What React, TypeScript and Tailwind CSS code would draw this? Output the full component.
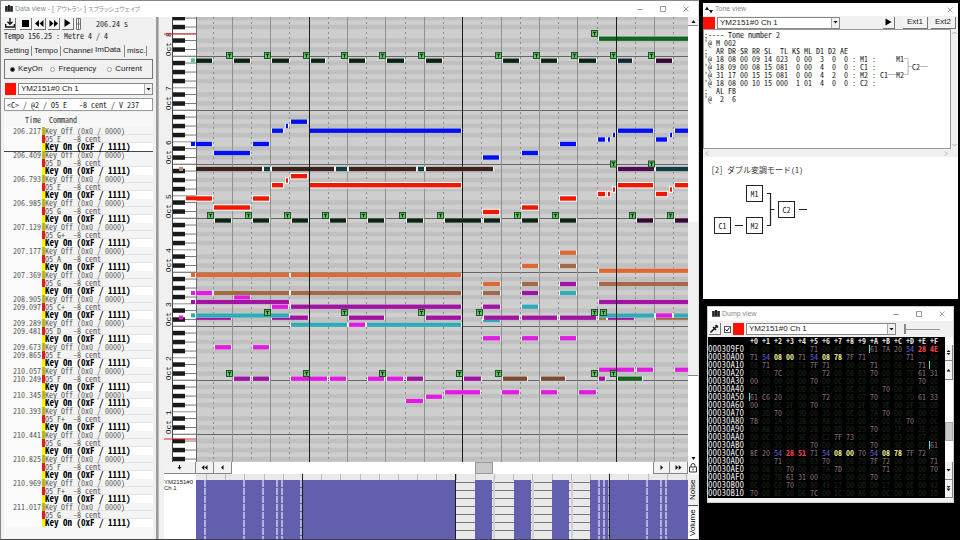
import React from "react";

const MONO =
  "font-['Noto_Sans_Mono_CJK_JP','Liberation_Mono','Noto_Sans_CJK_JP',monospace]";
const SANS = "font-['Liberation_Sans','Noto_Sans_CJK_JP',sans-serif]";
const MONO_STACK =
  "'Noto Sans Mono CJK JP','Liberation Mono','Noto Sans CJK JP',monospace";

/* ---------- event list ---------- */

type Ev = [time: string, kind: "off" | "on" | "note", note?: string];

const EVENTS: Ev[] = [
  ["206.217", "off"], ["", "note", "E"], ["", "on"],
  ["206.409", "off"], ["", "note", "D"], ["", "on"],
  ["206.793", "off"], ["", "note", "E"], ["", "on"],
  ["206.985", "off"], ["", "note", "G"], ["", "on"],
  ["207.129", "off"], ["", "note", "G+"], ["", "on"],
  ["207.177", "off"], ["", "note", "A"], ["", "on"],
  ["207.369", "off"], ["", "note", "G"], ["", "on"],
  ["208.905", "off"],
  ["209.097", "note", "C+"], ["", "on"],
  ["209.289", "off"],
  ["209.481", "note", "D"], ["", "on"],
  ["209.673", "off"],
  ["209.865", "note", "E"], ["", "on"],
  ["210.057", "off"],
  ["210.249", "note", "F"], ["", "on"],
  ["210.345", "off"], ["", "on"],
  ["210.393", "off"], ["", "note", "F+"], ["", "on"],
  ["210.441", "off"], ["", "note", "G"], ["", "on"],
  ["210.825", "off"], ["", "note", "F"], ["", "on"],
  ["210.969", "off"], ["", "note", "F+"], ["", "on"],
  ["211.017", "off"], ["", "note", "G"], ["", "on"],
];

const EV_STYLE = {
  off: { row: "bg-[#f4f4f4] text-[#555]", mark: "bg-[#b8bc10]" },
  on: { row: "bg-white text-black", mark: "bg-[#fafa00]" },
  note: { row: "bg-[#f4f4f4] text-[#555]", mark: "bg-[#e01c2c]" },
};

/* The playback cursor is drawn above this row. */
const CURSOR_ROW = 3;

function EventList() {
  return (
    <table className={`w-full border-collapse ${MONO} text-[8px] leading-[8px]`}>
      <thead>
        <tr className="h-[15px] text-[#333]">
          <th className="w-[37px] p-0 text-right font-normal">Time</th>
          <th className="w-1 p-0" />
          <th className="p-0 pl-1 text-left font-normal">Command</th>
        </tr>
      </thead>
      <tbody>
        {EVENTS.map(([time, kind, note], i) => (
          <tr key={i} className={`h-2 ${EV_STYLE[kind].row}`}>
            <td className={`h-2 bg-[#fbfbfb] p-0 text-right ${i === CURSOR_ROW ? "shadow-[inset_0_1px_0_#444]" : ""}`}>
              {time}
            </td>
            <td className="h-2 p-0 pl-px">
              <div className={`h-2 w-[3px] ${EV_STYLE[kind].mark}`} />
            </td>
            <td
              className={`h-2 whitespace-pre p-0 ${
                i === CURSOR_ROW
                  ? "shadow-[inset_0_1px_0_#444]"
                  : kind === "on"
                    ? ""
                    : "shadow-[inset_0_-1px_0_#e2e2e2]"
              }`}
            >
              {kind === "off" && "Key Off (0x0 / 0000)"}
              {kind === "on" && (
                <b className="block h-2 text-[9px] leading-[8px]">Key On (0xF / 1111)</b>
              )}
              {kind === "note" && `O5 ${(note ?? "").padEnd(2)}  -8 cent`}
            </td>
          </tr>
        ))}
      </tbody>
    </table>
  );
}

/* ---------- shared controls ---------- */

function ToolButton({ label, children, className = "" }: {
  label: string; children: React.ReactNode; className?: string;
}) {
  return (
    <button
      aria-label={label}
      className={`flex h-3 shrink-0 items-center justify-center border-r border-b border-[#777] bg-[#f3f3f3] ${className}`}
    >
      {children}
    </button>
  );
}

function ChannelSelect({ label, className }: { label: string; className: string }) {
  return (
    <div className={`flex h-3 border border-[#888] bg-white ${className}`}>
      <select
        aria-label={label}
        className={`min-w-0 flex-1 appearance-none bg-transparent pl-0.5 ${SANS} text-[8px] leading-[10px] text-[#222] outline-none`}
      >
        <option>YM2151#0 Ch 1</option>
      </select>
      <span className="flex w-2 items-center justify-center border-l border-[#aaa] bg-[#f0f0f0]">
        <svg width="5" height="3" aria-hidden="true"><path d="M0.5 0h4L2.500 2.500z" fill="#111" /></svg>
      </span>
    </div>
  );
}

function WindowButtons() {
  return (
    <div className="flex gap-[15px]">
      <button aria-label="Minimize">
        <svg width="8" height="8"><path d="M1.500 4.500h5" stroke="#999" /></svg>
      </button>
      <button aria-label="Maximize">
        <svg width="8" height="8"><path d="M1.500 1.500h5v5h-5z" stroke="#999" fill="none" /></svg>
      </button>
      <CloseButton />
    </div>
  );
}

function CloseButton() {
  return (
    <button aria-label="Close">
      <svg width="8" height="8"><path d="M1.500 1.500l5 5M6.500 1.500l-5 5" stroke="#888" strokeWidth="0.8" /></svg>
    </button>
  );
}

function BarsIcon() {
  return (
    <svg width="8" height="8" aria-hidden="true">
      <path d="M0 1h8v6h-8z" fill="#666" />
      <path d="M0.500 1h1.800v5h-1.800zM3 0h2v6h-2zM5.700 1h1.800v5h-1.800z" fill="#222" />
    </svg>
  );
}

/* ---------- left control panel ---------- */

function ControlPanel() {
  const radios = ["KeyOn", "Frequency", "Current"];
  const radioPad = ["", "ml-2", "ml-[11px]"];
  return (
    <section className="flex w-[157px] shrink-0 flex-col border-r-2 border-[#999] bg-[#f0f0f0] px-[3px]">
      <div className={`flex h-[13px] items-center ${MONO} text-[8px]`}>
        <ToolButton label="Import" className="w-3">
          <svg width="10" height="10"><path d="M5 0v6M2.500 3.800L5 6.300 7.500 3.800M0.700 6v3h8.600v-3" fill="none" stroke="#111" strokeWidth="1.300" /></svg>
        </ToolButton>
        <ToolButton label="Stop" className="ml-1 w-3">
          <svg width="7" height="7"><path d="M0 0h7v7h-7z" fill="#000" /></svg>
        </ToolButton>
        <ToolButton label="Rewind" className="ml-0.5 w-3">
          <svg width="9" height="7"><path d="M4 0v7L0 3.500zM8.500 0v7l-4-3.500z" fill="#000" /></svg>
        </ToolButton>
        <ToolButton label="Fast forward" className="ml-0.5 w-3">
          <svg width="9" height="7"><path d="M0.500 0v7l4-3.500zM5 0v7l4-3.500z" fill="#000" /></svg>
        </ToolButton>
        <ToolButton label="Play" className="ml-0.5 w-3">
          <svg width="7" height="8"><path d="M0.500 0v8L6.500 4z" fill="#000" /></svg>
        </ToolButton>
        <svg className="ml-0.5" width="6" height="12" aria-hidden="true">
          <path d="M0.500 0.500h4v11h-4zM2.500 0.500v11M0.500 6h4" fill="#fff" stroke="#666" strokeWidth="0.900" />
        </svg>
        <span className="ml-[14px] text-[#222]">206.24 s</span>
      </div>
      <p className={`h-3 whitespace-pre ${MONO} text-[8px] leading-3 text-[#222]`}>
        {"Tempo 156.25 : Metre 4 / 4"}
      </p>
      <div role="tablist" className={`mt-0.5 flex h-[14px] items-center ${SANS} text-[8px] leading-[10px] text-[#222]`}>
        <button role="tab" className="w-7 border-r border-[#888] text-left">Setting</button>
        <button role="tab" className="w-[29px] border-r border-[#888] pl-0.5 text-left">Tempo</button>
        <button role="tab" className="w-[34px] pl-0.5 text-left">Channel</button>
        <button role="tab" aria-selected="true" className="w-[30px] border-r border-[#888] pb-0.5 text-left">ImData</button>
        <button role="tab" className="w-[22px] border-r border-[#888] pl-0.5 text-left">misc.</button>
      </div>
      <div className={`mt-px flex h-5 items-center border border-[#777] pl-[5px] ${SANS} text-[8px] text-[#222]`}>
        {radios.map((r, i) => (
          <label key={r} className={`flex items-center gap-[3px] ${radioPad[i]}`}>
            <input
              type="radio"
              name="mode"
              defaultChecked={i === 0}
              className="h-[5px] w-[5px] appearance-none rounded-full border border-[#999] bg-white checked:border-[#555] checked:bg-black"
            />
            {r}
          </label>
        ))}
      </div>
      <div className="mt-1 flex gap-0.5 pl-px">
        <span className="h-3 w-[11px] bg-[#ff1000]" />
        <ChannelSelect label="Channel" className="flex-1" />
      </div>
      <input
        readOnly
        aria-label="Current state"
        value="<C> / @2 / O5 E   -8 cent / V 237"
        className={`mt-[3px] h-[13px] w-full border border-[#999] bg-white pl-0.5 ${MONO} text-[8px] leading-[10px] text-[#222] outline-none`}
      />
      <div className="mt-px flex-1 bg-[#f7f7f7]">
        <EventList />
      </div>
    </section>
  );
}

/* ---------- piano roll ---------- */

const LEFT = 196;
const TOP = 17;
const SEMI = 4.5;
const BASE = 434.3;
const BEAT = 19.2;
const BAR = 309;

const C = {
  dk: "#0c2412", pl: "#330636", tl: "#123c44", br: "#3a231a", gn: "#12641e",
  bl: "#0010f0", rd: "#ee1800", or: "#dc6a34", bw: "#a06a48", mg: "#e01ce0",
  pu: "#a014a4", cy: "#32aab6", db: "#7a4a34", dp: "#4d0c52", nv: "#0f2a34",
};
type Note = [keyof typeof C, number, number, number];

const LEAD: [number, number, number][] = [
  [196, 212, 144], [214, 250, 153], [253, 269, 144], [272, 283, 130.7],
  [286, 288, 126], [291, 307, 121.7], [310, 461, 130.7], [483, 499, 157.5],
  [522, 538, 153], [560, 576, 144], [598, 605, 139.5], [608, 610, 139.5],
  [613, 615, 135], [618, 653, 130.7], [656, 667, 139.5], [670, 672, 135],
  [675, 700, 130.7],
];

const NOTES: Note[] = [
  ["gn", 599, 700, 38.7],
  ["dk", 196, 212, 60.7], ["dk", 234, 250, 60.7], ["dk", 272, 289, 60.7],
  ["dk", 311, 325, 60.7], ["dk", 349, 365, 60.7], ["dk", 387, 404, 60.7],
  ["dk", 426, 442, 60.7], ["dk", 503, 519, 60.7], ["dk", 541, 557, 60.7],
  ["dk", 579, 596, 60.7], ["nv", 618, 632, 60.7], ["pl", 656, 672, 60.7],
  ["br", 196, 262, 169], ["tl", 264, 270, 169], ["br", 272, 334, 169],
  ["tl", 336, 347, 169], ["br", 349, 416, 169], ["tl", 418, 424, 169],
  ["br", 426, 493, 169], ["dp", 618, 654, 169], ["tl", 656, 700, 169],
  ["dk", 215, 231, 220.5], ["dk", 253, 269, 220.5], ["dk", 292, 308, 220.5],
  ["dk", 330, 346, 220.5], ["dk", 368, 384, 220.5], ["dk", 407, 423, 220.5],
  ["dk", 445, 481, 220.5], ["dk", 484, 500, 220.5], ["dk", 522, 538, 220.5],
  ["dk", 560, 576, 220.5], ["pl", 637, 653, 220.5], ["pl", 675, 700, 220.5],
  ["or", 196, 289, 275], ["or", 291, 461, 275], ["or", 483, 500, 284],
  ["or", 522, 538, 266], ["or", 560, 576, 252.7], ["or", 599, 700, 270.7],
  ["bw", 214, 289, 293], ["bw", 291, 461, 293], ["bw", 483, 500, 293],
  ["bw", 522, 538, 284], ["bw", 560, 576, 266], ["bw", 599, 700, 284],
  ["mg", 196, 212, 293], ["mg", 234, 250, 297.5], ["mg", 272, 288, 306.7],
  ["pu", 196, 289, 302], ["pu", 291, 461, 306.7], ["pu", 483, 500, 306.7],
  ["pu", 522, 538, 293], ["pu", 560, 576, 284], ["pu", 599, 700, 302],
  ["cy", 483, 500, 320],
  ["bw", 599, 606, 317.7], ["pu", 608, 634, 317.7], ["bw", 656, 700, 317.7],
  ["pu", 196, 231, 317.7], ["pu", 272, 308, 317.7], ["pu", 349, 384, 317.7],
  ["pu", 426, 461, 317.7], ["pu", 484, 519, 317.7], ["pu", 522, 557, 317.7],
  ["pu", 560, 596, 317.7],
  ["cy", 196, 289, 315.5], ["cy", 522, 538, 306.7], ["cy", 560, 576, 293],
  ["cy", 599, 654, 315.5], ["mg", 656, 672, 315.5], ["cy", 674, 700, 315.5],
  ["cy", 291, 347, 324.7], ["mg", 349, 365, 324.7], ["cy", 367, 461, 324.7],
  ["mg", 215, 231, 347.3], ["mg", 253, 269, 347.3], ["mg", 483, 500, 338.3],
  ["mg", 522, 538, 338.3], ["mg", 560, 576, 338.3], ["mg", 599, 634, 369.7],
  ["mg", 637, 653, 369.7], ["mg", 675, 700, 369.7],
  ["pu", 234, 250, 378.7], ["pu", 253, 269, 378.7], ["mg", 291, 327, 378.7],
  ["mg", 330, 346, 378.7], ["mg", 368, 384, 378.7], ["mg", 387, 403, 378.7],
  ["pu", 407, 423, 378.7], ["pu", 464, 481, 378.7], ["db", 503, 527, 378.7],
  ["db", 541, 565, 378.7], ["pu", 599, 605, 378.7], ["gn", 618, 642, 378.7],
  ["mg", 406, 423, 401], ["mg", 426, 442, 396.7], ["mg", 445, 480, 392.3],
  ["mg", 502, 519, 392.3], ["mg", 541, 557, 392.3], ["mg", 579, 596, 392.3],
];

const TIES: [number, number[]][] = [
  [33.5, [594.5]],
  [55.5, [229.5, 267.5, 306.5, 344.5, 382.5, 421.5, 498.5, 536.5, 574.5, 613.5, 651.5]],
  [164, [613.5, 651.5]],
  [215.5, [210.5, 248.5, 287.5, 325.5, 363.5, 402.5, 440.5, 517.5, 555.5, 632.5, 670.5]],
  [312.5, [267.5, 344.5, 421.5, 479.5, 594.5, 603.5]],
  [373.5, [229.5, 306.5, 382.5, 459.5, 498.5, 594.5, 613.5]],
];

const isBlack = (s: number) => [1, 3, 6, 8, 10].includes(((s % 12) + 12) % 12);
const SEMIS = Array.from({ length: 101 }, (_, i) => i - 7);
const OCT_LINES = Array.from({ length: 8 }, (_, i) => BASE - 54 * i);

function Keyboard() {
  const marks: [string, number, number, number][] = [
    ["#50c888", 191, 4, 60.3], [C.bl, 191, 4, 144], ["#b88a78", 179, 4, 169],
    [C.rd, 186, 10, 198.3], [C.or, 191, 4, 275], [C.mg, 191, 4, 293],
    [C.pu, 191, 4, 302], [C.cy, 191, 4, 315.3], [C.mg, 179, 4, 317.5],
  ];
  return (
    <svg className="block h-full w-full" role="img" aria-label="Keyboard">
      <g transform={`translate(-164 ${-TOP})`}>
        <rect x="164" y="0" width="9" height="470" fill="#f0f0f0" />
        <rect x="172.500" y="0" width="24" height="470" fill="#fff" stroke="#444" />
        {SEMIS.map((s) => {
          const y = BASE - SEMI * (s + 1);
          const m = ((s % 12) + 12) % 12;
          return (
            <g key={s}>
              {isBlack(s) && (
                <>
                  <path d={`M184 ${y + 2.25}H196`} stroke="#777" />
                  <rect x="173" y={y} width="12" height="4.5" fill="#1a1a1a" />
                </>
              )}
              {(m === 0 || m === 5) && (
                <path d={`M173 ${y + SEMI}H196`} stroke="#777" strokeWidth={m ? 0.8 : 1.2} />
              )}
            </g>
          );
        })}
        {OCT_LINES.map((y, i) => (
          <text
            key={i}
            transform={`translate(171 ${y}) rotate(-90)`}
            fontFamily="'Liberation Mono',monospace"
            fontSize="8"
            fill="#111"
          >
            {`Oct ${i + 1}`}
          </text>
        ))}
        <path d="M164 34h32M164 439h32" stroke="#e02020" />
        {marks.map(([f, x, w, y], i) => (
          <rect key={i} x={x} y={y - 2} width={w} height="4" fill={f} />
        ))}
      </g>
    </svg>
  );
}

function Roll() {
  const ks = Array.from({ length: 120 }, (_, i) => i - 5);
  return (
    <svg className="block h-full w-full" role="img" aria-label="Piano roll">
      <rect width="100%" height="100%" fill="#cecece" />
      <g transform={`translate(0 ${-TOP})`}>
        {SEMIS.filter(isBlack).map((s) => (
          <rect key={s} x="0" y={BASE - SEMI * (s + 1)} width="100%" height={SEMI} fill="#c0c0c0" />
        ))}
        {OCT_LINES.map((y) => (
          <rect key={y} x="0" y={Math.floor(y)} width="100%" height="1" fill="#666" />
        ))}
      </g>
      <g transform={`translate(${-LEFT} ${-TOP})`}>
        {ks.map((k) => {
          const x = Math.floor(BAR + BEAT * k) + 0.5;
          const bar = k % 8 === 0;
          const dotted = k % 2 !== 0;
          return (
            <path
              key={k}
              d={`M${x} ${TOP}V470`}
              stroke={bar ? "#1c1c1c" : dotted ? "#8c8c8c" : "#909090"}
              strokeDasharray={dotted ? "2 3" : undefined}
            />
          );
        })}
        <path d="M196.500 0V470" stroke="#666" />
        {NOTES.map(([c, a, b, y], i) => (
          <g key={i}>
            <rect x={a - 1} y={y - 2.3} width={b - a + 2} height="4.6" fill="#f4f4f4" />
            <rect x={a} y={y - 2.2} width={b - a} height="4.4" fill={C[c]} />
          </g>
        ))}
        {LEAD.map(([a, b, y], i) => (
          <g key={i}>
            <rect x={a - 1} y={y - 2.3} width={b - a + 2} height="4.6" fill="#f4f4f4" />
            <rect x={a} y={y - 2.2} width={b - a} height="4.4" fill={C.bl} />
            <rect x={a - 1} y={y + 51.3} width={b - a + 2} height="6.4" fill="#fff" />
            <rect x={a} y={y + 52.3} width={b - a} height="4.4" fill={C.rd} />
          </g>
        ))}
        <path d={`M309.500 ${TOP}V470M616.500 ${TOP}V470`} stroke="#1c1c1c" />
        {TIES.map(([y, xs]) =>
          xs.map((x) => (
            <g key={`${x}-${y}`}>
              <rect x={x - 3} y={y - 3} width="6" height="6" fill="#5ccc60" stroke="#1c4420" strokeWidth="0.9" />
              <path d={`M${x - 1.7} ${y - 1.3}h3.4M${x} ${y - 1.3}v3.4`} stroke="#0a200c" strokeWidth="1.1" />
            </g>
          ))
        )}
      </g>
    </svg>
  );
}

/* ---------- volume lane ---------- */

const VOL: [number, number][] = [
  [196, 455], [475, 492], [514, 531], [552, 569], [590, 720],
];
const VOL_GAPS = [204, 243, 262, 276, 281, 300, 598, 603, 608, 646, 660, 665];

function VolumeLane() {
  return (
    <svg className="block h-full w-full" role="img" aria-label="Volume">
      <rect width="100%" height="100%" fill="#e9e9e9" />
      <g transform="translate(-196 -473)">
        {[481, 489, 497, 505, 513, 521, 529].map((y) => (
          <rect key={y} x="196" y={y} width="1600" height="1" fill="#777" />
        ))}
        {Array.from({ length: 27 }, (_, i) => (
          <rect key={i} x={Math.floor(206.500 + i * BEAT)} y="473" width="1" height="6" fill="#bbb" />
        ))}
        {[493, 532, 571].map((x) => <rect key={x} x={x} y="479" width="2" height="59" fill="#cfcfd4" />)}
        {VOL.map(([a, b]) => <rect key={a} x={a} y="479" width={b - a} height="59" fill="#625fae" />)}
        {VOL_GAPS.map((x) => (
          <path key={x} d={`M${x + 1} 479V538`} stroke="#b4b2dc" strokeWidth="2" strokeDasharray="7 1" />
        ))}
        {[302, 455, 609].map((x) => <rect key={x} x={x} y="473" width="1" height="65" fill="#1c1c1c" />)}
      </g>
    </svg>
  );
}

function RollButton({ label, className, d }: { label: string; className: string; d: string }) {
  return (
    <button
      aria-label={label}
      className={`flex shrink-0 items-center justify-center border-r border-b border-[#888] bg-[#f2f2f2] ${className}`}
    >
      <svg width="7" height="5"><path d={d} fill="#111" /></svg>
    </button>
  );
}

function RollPane() {
  return (
    <section className="flex min-w-0 flex-1 flex-col border-l border-[#bbb] bg-[#f0f0f0] pl-[5px]">
      <div className="flex min-h-0 flex-1">
        <div className="w-8 shrink-0"><Keyboard /></div>
        <div className="min-w-0 flex-1"><Roll /></div>
        <div className="flex w-2.5 shrink-0 flex-col items-center bg-white">
          <button aria-label="Scroll up" className="flex h-[9px] w-full items-center justify-center border-b border-[#888] bg-[#f2f2f2]">
            <svg width="5" height="3"><path d="M2.500 0L4.500 3h-4z" fill="#111" /></svg>
          </button>
          <div className="mt-[196px] h-[154px] w-full border-b border-[#888] bg-[#f0f0f0]" />
          <div className="flex-1" />
          <button aria-label="Scroll down" className="flex h-2 w-full items-center justify-center">
            <svg width="5" height="3"><path d="M0.500 0h4L2.500 3z" fill="#111" /></svg>
          </button>
        </div>
      </div>
      <div className="flex h-3 shrink-0 bg-white">
        <RollButton label="Follow" className="h-3 w-8" d="M3 0h1v2h1.500L3.500 4.500 1.500 2h1.500z" />
        <RollButton label="Fast back" className="h-3 w-[18px]" d="M3.300 0v5L0.500 2.500zM6.500 0v5L3.700 2.500z" />
        <RollButton label="Back" className="h-3 w-[18px]" d="M4.500 0v5L2 2.500z" />
        <div className="flex flex-1 justify-center pl-[82px]">
          <button aria-label="Scroll position" className="h-3 w-[18px] border border-[#999] bg-[#c8c8c8]" />
        </div>
        <RollButton label="Forward" className="h-3 w-[17px] border-l" d="M2.500 0v5L5 2.500z" />
        <RollButton label="Fast forward" className="h-3 w-[18px]" d="M0.500 0v5L3.300 2.500zM3.700 0v5L6.500 2.500z" />
        <button aria-label="Lock" className="flex w-2.5 items-center justify-center">
          <svg width="8" height="10"><path d="M2 4V2.500a2 2 0 0 1 4 0V4M0.500 4h7v5h-7zM4 5.500v2" fill="none" stroke="#222" strokeWidth="0.9" /></svg>
        </button>
      </div>
      <div className="flex h-[65px] shrink-0">
        <div className={`w-8 shrink-0 bg-white pt-[5px] ${SANS} text-[6px] leading-[6px] text-[#222]`}>
          YM2151#0
          <br />
          Ch 1
        </div>
        <div className="min-w-0 flex-1"><VolumeLane /></div>
        <div role="tablist" className={`flex w-2.5 shrink-0 flex-col ${SANS} text-[8px] leading-[10px] text-black`}>
          <button role="tab" className="flex h-8 rotate-180 items-center justify-center border-t border-[#555] [writing-mode:vertical-rl]">Noise</button>
          <button role="tab" aria-selected="true" className="flex flex-1 rotate-180 items-center justify-center bg-white [writing-mode:vertical-rl]">Volume</button>
        </div>
      </div>
    </section>
  );
}

const KANA =
  "font-['Noto_Sans_CJK_JP',sans-serif] text-[6px] [font-feature-settings:'palt']";

function DataView() {
  return (
    <main className="flex min-w-0 flex-1 flex-col border border-t-[#888] border-r-[#ddd] border-b-[#444] border-l-[#888] bg-white">
      <header className="flex h-4 shrink-0 items-center justify-between pr-2 pl-1">
        <h1 className={`flex items-center gap-0.5 whitespace-pre ${SANS} text-[7px] font-normal text-[#888]`}>
          <BarsIcon />
          <span>
            {"Data view - [ "}
            <span className={KANA}>アウトラン</span>
            {" ] "}
            <span className={KANA}>スプラッシュウェイブ</span>
          </span>
        </h1>
        <WindowButtons />
      </header>
      <div className="flex min-h-0 flex-1">
        <ControlPanel />
        <RollPane />
      </div>
    </main>
  );
}

/* ---------- tone view ---------- */

const TONE = [
  ";---- Tone number 2",
  "'@ M 002",
  ";  AR DR SR RR SL  TL KS ML D1 D2 AE",
  "'@ 18 08 00 09 14 023  0 00  3  0  0 : M1 :     M1┐",
  "'@ 18 09 00 08 15 081  0 00  4  0  0 : C1 :       ├C2─",
  "'@ 31 17 00 15 15 081  0 00  4  2  0 : M2 : C1─M2┘",
  "'@ 18 08 00 10 15 000  1 01  4  0  0 : C2 :",
  ";  AL FB",
  "'@  2  6",
].join("\n");

function ToneView() {
  const ops: [string, number, number][] = [
    ["M1", 43, 0], ["C2", 75, 16], ["C1", 11, 32], ["M2", 43, 32],
  ];
  return (
    <section className="flex h-[296px] flex-col bg-[#f0f0f0]">
      <header className="flex h-[13px] shrink-0 items-center justify-between bg-white pr-1 pl-0.5">
        <h2 className={`flex items-center gap-0.5 ${SANS} text-[7px] font-normal text-[#888]`}>
          <svg width="8" height="8" aria-hidden="true"><path d="M0 4L2 0.500 4 4zM4 4h4L6 7.500z" fill="#111" /></svg>
          Tone view
        </h2>
        <CloseButton />
      </header>
      <div className={`flex h-[13px] shrink-0 items-center pr-0.5 ${SANS} text-[8px] text-[#222]`}>
        <span className="mr-0.5 h-3 w-3 bg-[#ff1000]" />
        <ChannelSelect label="Tone channel" className="w-[123px]" />
        <div className="flex-1" />
        <ToolButton label="Play tone" className="w-3">
          <svg width="7" height="8"><path d="M0.500 0.500v7L6.500 4z" fill="#000" /></svg>
        </ToolButton>
        <ToolButton label="Ext1" className="ml-2 w-[25px]">Ext1</ToolButton>
        <ToolButton label="Ext2" className="ml-[3px] w-[25px]">Ext2</ToolButton>
      </div>
      <div className="flex h-[120px] shrink-0">
        <textarea
          readOnly
          wrap="off"
          aria-label="Tone definition"
          value={TONE}
          className={`min-w-0 flex-1 resize-none overflow-hidden border border-[#999] bg-white pt-px ${MONO} text-[8px] leading-[8px] text-[#222] outline-none`}
        />
        <div className="flex w-[7px] flex-col items-center justify-between py-0.5">
          <svg width="5" height="4"><path d="M0.500 3l2-2 2 2" fill="none" stroke="#aaa" /></svg>
          <svg width="5" height="4"><path d="M0.500 1l2 2 2-2" fill="none" stroke="#aaa" /></svg>
        </div>
      </div>
      <div className="flex h-2 shrink-0 items-center justify-between pr-2.5 pl-0.5">
        <svg width="4" height="5"><path d="M3 0.500l-2 2 2 2" fill="none" stroke="#aaa" /></svg>
        <svg width="4" height="5"><path d="M1 0.500l2 2-2 2" fill="none" stroke="#aaa" /></svg>
      </div>
      <div className={`flex-1 bg-white pt-2 ${MONO} text-[8px] leading-[10px] text-[#333]`}>
        <p className="pl-2 whitespace-pre">[2] ダブル変調モード(1)</p>
        <svg className="mt-2.5 block" width="160" height="52" role="img" aria-label="Algorithm diagram">
          {ops.map(([t, x, y]) => (
            <g key={t}>
              <rect x={x + 0.5} y={y + 0.5} width="16" height="16" fill="none" stroke="#222" />
              <text x={x + 8.5} y={y + 11.5} fontSize="8" textAnchor="middle" fontFamily={MONO_STACK} fill="#222">{t}</text>
            </g>
          ))}
          <path d="M64 8.500h3.500v32h-3.500M67.500 24.500h4M32 40.500h8M96 24.500h8" fill="none" stroke="#222" strokeWidth="1.200" />
        </svg>
      </div>
    </section>
  );
}

/* ---------- dump view ---------- */

/* Prefix marks a byte's colour: g grey, b blue, y yellow, r red; none is an untouched cell. */
const DUMP: [string, string][] = [
  ["000309F0", "08 00 78 00 08 g71 00 AE 08 00 g61 g7A g20 b54 r28 r4E"],
  ["00030A00", "g71 b54 y08 y00 g71 b54 y08 y78 g7F g71 00 00 00 g71 00 08"],
  ["00030A10", "08 g71 00 08 78 g7F g71 00 00 00 g71 00 08 00 g71 00"],
  ["00030A20", "08 7A g7C 00 00 00 g72 00 08 03 g70 00 08 7F g61 g31"],
  ["00030A30", "g00 00 00 00 00 g70 00 0C 00 C0 00 0D 00 C0 g70 00"],
  ["00030A40", "8D 00 17 00 0D 0C 17 00 0E 00 42 g70 00 9F 00 D0"],
  ["00030A50", "g61 gC6 g20 00 00 00 g72 00 08 07 g70 00 00 7D g61 g33"],
  ["00030A60", "g00 00 0C 2F 00 g70 00 0C 00 2F 00 9E 00 2F 38 0D"],
  ["00030A70", "00 3D g70 00 9D 00 30 00 0E 00 7A g70 00 8E 00 C0"],
  ["00030A80", "g7B 00 1A 00 38 00 A8 00 33 00 1C 00 A6 g70 00 0C"],
  ["00030A90", "00 A8 00 10 00 28 00 9D 00 29 g70 00 1F 00 2E 00"],
  ["00030AA0", "00 0C 00 00 9E 00 C2 g7F g73 00 3C 00 03 00 07 00"],
  ["00030AB0", "02 00 30 00 C0 g70 00 00 0D 00 g70 00 9E 00 02 g61"],
  ["00030AC0", "g8E g20 b54 r28 r51 g71 b54 y08 y00 g70 b54 y08 y78 g7F g72 00"],
  ["00030AD0", "00 00 g71 00 98 03 g70 00 08 79 g7F g72 00 00 00 g71"],
  ["00030AE0", "00 08 09 g70 00 08 7A g7D 00 00 00 g71 00 08 00 g70"],
  ["00030AF0", "00 09 7B g61 g31 g00 00 00 00 00 g70 00 0C 00 C0 00"],
  ["00030B00", "0C 00 C0 g70 00 90 49 17 00 0D 00 17 00 0E 00 42"],
  ["00030B10", "g70 00 8E 00 D6 g7C 00 1C 00 A6 00 0C 00 A6 00 1D"],
];

const BYTE_COLOUR: Record<string, string> = {
  g: "text-[#8a7878]",
  b: "text-[#6464d4]",
  y: "font-bold text-[#e4e48c]",
  r: "font-bold text-[#f04444]",
};
const CARETS = ["0-10", "2-15", "6-0", "12-15"];

function DumpView() {
  return (
    <section className="mx-1 flex flex-col border border-[#ccc] bg-[#f0f0f0] pb-1">
      <header className="flex h-[14px] shrink-0 items-center justify-between bg-white pr-[7px] pl-1">
        <h2 className={`flex items-center gap-0.5 ${SANS} text-[7px] font-normal text-[#888]`}>
          <BarsIcon />
          Dump view
        </h2>
        <WindowButtons />
      </header>
      <div className="flex h-4 shrink-0 items-center pl-px">
        <ToolButton label="Pin" className="w-3">
          <svg width="9" height="9"><path d="M0.500 8.500L4 5M3 3l3 3M4.500 4.500L7.500 1.500M5.500 1l2.500 2.500" stroke="#111" strokeWidth="1.500" /></svg>
        </ToolButton>
        <label className="relative ml-[3px] flex h-[7px] w-[7px]">
          <input type="checkbox" defaultChecked aria-label="Follow channel" className="h-[7px] w-[7px] appearance-none border border-[#555] bg-white" />
          <svg className="pointer-events-none absolute inset-0" width="7" height="7"><path d="M1.500 3.500l1.500 1.500 2.500-3.500" fill="none" stroke="#111" /></svg>
        </label>
        <span className="ml-0.5 h-3 w-[11px] bg-[#ff1000]" />
        <ChannelSelect label="Dump channel" className="ml-0.5 w-[150px]" />
        <input
          type="range"
          defaultValue={0}
          aria-label="Speed"
          className="ml-2 h-3 w-9 appearance-none bg-[linear-gradient(#999,#999)] bg-[length:100%_1px] bg-center bg-no-repeat [&::-webkit-slider-thumb]:h-2.5 [&::-webkit-slider-thumb]:w-0.5 [&::-webkit-slider-thumb]:appearance-none [&::-webkit-slider-thumb]:bg-[#888]"
        />
      </div>
      <div className="flex">
        <div className="min-w-0 flex-1 bg-black pb-px">
          <table className={`border-collapse ${MONO} text-[8px] leading-[8px] text-[#1c2a1c]`}>
            <thead>
              <tr className="h-2 font-bold text-[#ddd]">
                <th className="w-[42px] p-0" />
                {"0123456789ABCDEF".split("").map((h) => (
                  <th key={h} className="w-3 p-0 text-left">+{h}</th>
                ))}
              </tr>
            </thead>
            <tbody>
              {DUMP.map(([addr, bytes], r) => (
                <tr key={addr} className="h-2">
                  <th className="h-2 p-0 text-left text-[9px] leading-[8px] font-normal text-[#e8e8e8]">{addr}</th>
                  {bytes.split(" ").map((b, c) => (
                    <td
                      key={c}
                      className={`h-2 p-0 ${b.length === 3 ? BYTE_COLOUR[b[0]] : ""} ${
                        CARETS.includes(`${r}-${c}`) ? "shadow-[-1px_0_0_#40e8e0]" : ""
                      }`}
                    >
                      {b.slice(-2)}
                    </td>
                  ))}
                </tr>
              ))}
            </tbody>
          </table>
        </div>
        <div className="flex w-2 shrink-0 flex-col bg-white">
          <RollButton label="Page up" className="mt-2 h-4 w-2" d="M3.500 0l2 2h-4zM3.500 5l2-2h-4z" />
          <RollButton label="Line up" className="h-[19px] w-2" d="M3.500 1l2 2.500h-4z" />
          <div className="flex-1" />
          <div className="mb-[21px] h-[19px] border border-[#aaa] bg-[#c8c8c8]" />
          <RollButton label="Line down" className="h-[18px] w-2" d="M3.500 3.500l2-2.500h-4z" />
          <RollButton label="Page down" className="h-[18px] w-2" d="M3.500 2l2-2h-4zM3.500 5l2-2.500h-4z" />
        </div>
      </div>
    </section>
  );
}

export default function App() {
  return (
    <div className="flex h-screen min-h-[540px] gap-1 bg-black">
      <DataView />
      <aside className="flex w-[257px] shrink-0 flex-col gap-[7px] pt-[3px] pr-0.5">
        <ToneView />
        <DumpView />
      </aside>
    </div>
  );
}
